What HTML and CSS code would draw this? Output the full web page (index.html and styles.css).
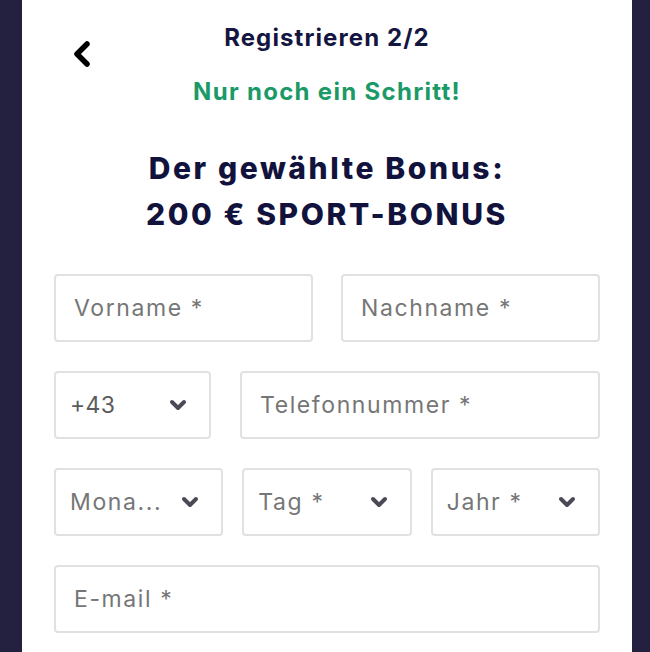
FILE: index.html
```html
<!DOCTYPE html>
<html lang="de">
<head>
<meta charset="utf-8">
<title>Registrieren 2/2</title>
<link rel="stylesheet" href="styles.css">
</head>
<body>
<main class="panel">
  <header class="topbar">
    <button class="back" aria-label="Zurück">
      <svg width="20" height="26" viewBox="0 0 20 26"><polyline points="15,3 5,13 15,23" fill="none" stroke="#000" stroke-width="5.5" stroke-linecap="round" stroke-linejoin="round"/></svg>
    </button>
    <h1 class="title">Registrieren 2/2</h1>
    <span></span>
  </header>
  <p class="step">Nur noch ein Schritt!</p>
  <h2 class="bonus">Der gewählte Bonus:<br>200 € SPORT-BONUS</h2>

  <form class="form">
    <div class="row two">
      <div class="field"><span class="ph">Vorname *</span></div>
      <div class="field"><span class="ph">Nachname *</span></div>
    </div>
    <div class="row phone">
      <div class="field select"><span class="val">+43</span><svg class="chev" width="18" height="12" viewBox="0 0 18 12"><polyline points="3,3 9,9 15,3" fill="none" stroke="#4a4a57" stroke-width="4" stroke-linecap="round" stroke-linejoin="round"/></svg></div>
      <div class="field"><span class="ph">Telefonnummer *</span></div>
    </div>
    <div class="row three">
      <div class="field select"><span class="ph">Mona...</span><svg class="chev" width="18" height="12" viewBox="0 0 18 12"><polyline points="3,3 9,9 15,3" fill="none" stroke="#4a4a57" stroke-width="4" stroke-linecap="round" stroke-linejoin="round"/></svg></div>
      <div class="field select"><span class="ph">Tag *</span><svg class="chev" width="18" height="12" viewBox="0 0 18 12"><polyline points="3,3 9,9 15,3" fill="none" stroke="#4a4a57" stroke-width="4" stroke-linecap="round" stroke-linejoin="round"/></svg></div>
      <div class="field select"><span class="ph">Jahr *</span><svg class="chev" width="18" height="12" viewBox="0 0 18 12"><polyline points="3,3 9,9 15,3" fill="none" stroke="#4a4a57" stroke-width="4" stroke-linecap="round" stroke-linejoin="round"/></svg></div>
    </div>
    <div class="row one">
      <div class="field"><span class="ph">E-mail *</span></div>
    </div>
  </form>
</main>
</body>
</html>
```

FILE: styles.css
```css
* { box-sizing: border-box; }
html, body { margin: 0; padding: 0; }
body {
  background: #23213f;
  font-family: Inter, "Open Sans", "DejaVu Sans", sans-serif;
  height: 652px;
  overflow: hidden;
}
.panel {
  margin-left: 22px;
  width: 610px;
  min-height: 652px;
  background: #ffffff;
  padding: 0 32px;
}
.topbar {
  display: grid;
  grid-template-columns: 1fr auto 1fr;
  align-items: center;
  padding-top: 24px;
  height: 68px;
}
.back {
  justify-self: start;
  margin-left: 18px;
  margin-top: 15px;
  padding: 0;
  border: 0;
  background: none;
  display: flex;
  width: 20px;
  height: 26px;
}
.title {
  margin: 0;
  font-size: 24px;
  line-height: 28px;
  font-weight: 700;
  letter-spacing: 1.1px;
  color: #15163f;
  align-self: start;
}
.step {
  margin: 10px 0 0;
  text-align: center;
  font-size: 24px;
  line-height: 28px;
  font-weight: 700;
  letter-spacing: 1.3px;
  color: #1b9a68;
}
.bonus {
  margin: 39px 0 0;
  text-align: center;
  font-size: 30px;
  line-height: 46px;
  font-weight: 800;
  letter-spacing: 2.6px;
  color: #11133d;
}
.form {
  margin-top: 37px;
  display: flex;
  flex-direction: column;
  gap: 29px;
}
.row { display: grid; }
.row.two { grid-template-columns: 1fr 1fr; column-gap: 28px; }
.row.phone { grid-template-columns: 157px 1fr; column-gap: 29px; }
.row.three { grid-template-columns: 1fr 1fr 1fr; column-gap: 19px; }
.row.one { grid-template-columns: 1fr; }
.field {
  height: 68px;
  border: 2.5px solid #e1e1e1;
  border-radius: 4px;
  display: flex;
  align-items: center;
  padding-left: 18px;
  padding-right: 22px;
  font-size: 23px;
  letter-spacing: 1.6px;
  color: #767676;
}
.field.select { justify-content: space-between; padding-left: 14px; }
.ph { color: #767676; }
.val { color: #5c5c5c; letter-spacing: 0.3px; }
.chev { flex: none; }
```
